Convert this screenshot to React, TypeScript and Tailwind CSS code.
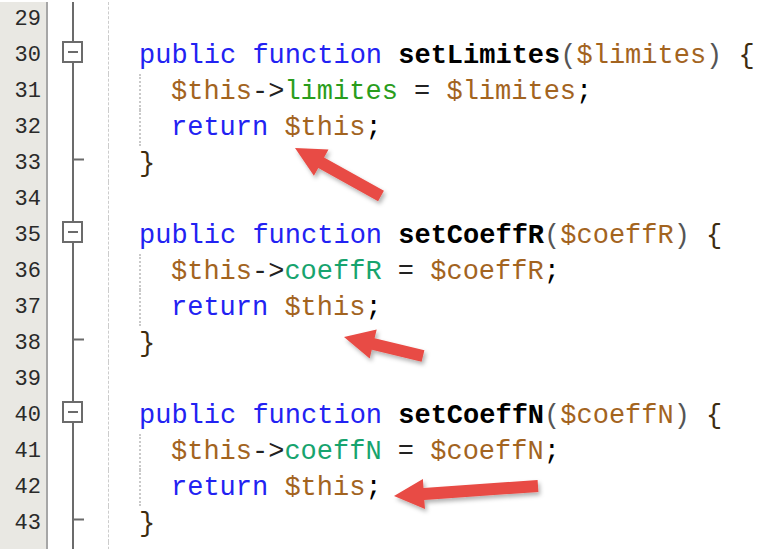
type Tok = [string, string];

const KW = 'text-[#2222f2]';
const FN = 'font-bold text-black';
const PAREN = 'text-[#555555]';
const VAR = 'text-[#a3641f]';
const OP = 'text-[#222222]';
const PROP_A = 'text-[#2a9d1c]';
const PROP_B = 'text-[#17a46e]';
const BRACE = 'text-[#3d2c10]';
const SEMI = 'text-black';

type Row = {
    n: number | null;
    fold?: 'open' | 'end';
    indent?: boolean;
    toks: Tok[];
};

function method(name: string, arg: string, propCls: string): Tok[][] {
    return [
        [['public', KW], [' ', OP], ['function', KW], [' ', OP], [name, FN], ['(', PAREN], ['$' + arg, VAR], [')', PAREN], [' ', OP], ['{', BRACE]],
        [['$this', VAR], ['->', OP], [arg, propCls], [' = ', OP], ['$' + arg, VAR], [';', SEMI]],
        [['return', KW], [' ', OP], ['$this', VAR], [';', SEMI]],
        [['}', BRACE]],
    ];
}

function buildRows(): Row[] {
    const rows: Row[] = [{ n: 29, toks: [] }];
    const blocks: [string, string, string][] = [
        ['setLimites', 'limites', PROP_A],
        ['setCoeffR', 'coeffR', PROP_B],
        ['setCoeffN', 'coeffN', PROP_B],
    ];
    let n = 30;
    blocks.forEach(([name, arg, cls], i) => {
        const lines = method(name, arg, cls);
        rows.push({ n: n++, fold: 'open', toks: lines[0] });
        rows.push({ n: n++, indent: true, toks: lines[1] });
        rows.push({ n: n++, indent: true, toks: lines[2] });
        rows.push({ n: n++, fold: 'end', toks: lines[3] });
        if (i < blocks.length - 1) rows.push({ n: n++, toks: [] });
    });
    // trailing row, only its gutter and fold line show below line 43
    rows.push({ n: null, toks: [] });
    return rows;
}

function FoldMark({ kind }: { kind?: 'open' | 'end' }) {
    return (
        <svg width="60" height="36" viewBox="0 0 60 36" className="block shrink-0">
            <rect x="24" y="0" width="2" height="36" fill="#6b6b6b" />
            {kind === 'open' && (
                <g>
                    <rect x="15" y="4" width="19" height="20" fill="#ffffff" stroke="#6b6b6b" strokeWidth="2" />
                    <rect x="20" y="13" width="10" height="2" fill="#6b6b6b" />
                </g>
            )}
            {kind === 'end' && <rect x="26" y="12.5" width="10" height="2" fill="#6b6b6b" />}
        </svg>
    );
}

function arrowPoints(tip: [number, number], tail: [number, number], shaft: number, headLen: number, headW: number) {
    const dx = tail[0] - tip[0];
    const dy = tail[1] - tip[1];
    const len = Math.hypot(dx, dy);
    const ux = dx / len;
    const uy = dy / len;
    const nx = -uy;
    const ny = ux;
    const bx = tip[0] + ux * headLen;
    const by = tip[1] + uy * headLen;
    const pts: [number, number][] = [
        tip,
        [bx + (nx * headW) / 2, by + (ny * headW) / 2],
        [bx + (nx * shaft) / 2, by + (ny * shaft) / 2],
        [tail[0] + (nx * shaft) / 2, tail[1] + (ny * shaft) / 2],
        [tail[0] - (nx * shaft) / 2, tail[1] - (ny * shaft) / 2],
        [bx - (nx * shaft) / 2, by - (ny * shaft) / 2],
        [bx - (nx * headW) / 2, by - (ny * headW) / 2],
    ];
    return pts.map((p) => p[0].toFixed(1) + ',' + p[1].toFixed(1)).join(' ');
}

function Arrows() {
    const arrows: [[number, number], [number, number]][] = [
        [[295, 148], [381, 196]],
        [[344, 337], [423, 356]],
        [[394, 496], [538, 486]],
    ];
    return (
        <svg className="absolute inset-0 pointer-events-none" width="759" height="549" viewBox="0 0 759 549">
            <defs>
                <filter id="arrowShadow" x="-20%" y="-50%" width="140%" height="200%">
                    <feDropShadow dx="2" dy="3" stdDeviation="2" floodColor="#000000" floodOpacity="0.3" />
                </filter>
            </defs>
            {arrows.map(([tip, tail], i) => (
                <polygon key={i} points={arrowPoints(tip, tail, 12, 30, 30)} fill="#e84b44" filter="url(#arrowShadow)" />
            ))}
        </svg>
    );
}

export default function App() {
    const rows = buildRows();
    return (
        <div className="relative w-[759px] h-[549px] overflow-hidden bg-white" style={{ fontFamily: '"Liberation Mono", "Courier New", monospace' }}>
            <div className="flex flex-col pt-[2px]">
                {rows.map((row, idx) => (
                    <div key={idx} className="flex h-[36px] shrink-0">
                        <div className="w-[48px] shrink-0 bg-[#e9e8e3] border-r-2 border-[#a6a6a6] text-right pr-[5px] text-[22px] leading-[36px] text-[#2a2a2a]">
                            {row.n}
                        </div>
                        <FoldMark kind={row.fold} />
                        <div className="w-0 border-l border-dashed border-[#cccccc]" />
                        <div className="flex pl-[30px] text-[27px] leading-[36px] whitespace-pre">
                            {row.indent && <span className="w-[32px] shrink-0 border-l-2 border-dotted border-[#c9c9c9]" />}
                            {row.toks.map(([t, cls], i) => (
                                <span key={i} className={cls}>
                                    {t}
                                </span>
                            ))}
                        </div>
                    </div>
                ))}
            </div>
            <Arrows />
        </div>
    );
}
